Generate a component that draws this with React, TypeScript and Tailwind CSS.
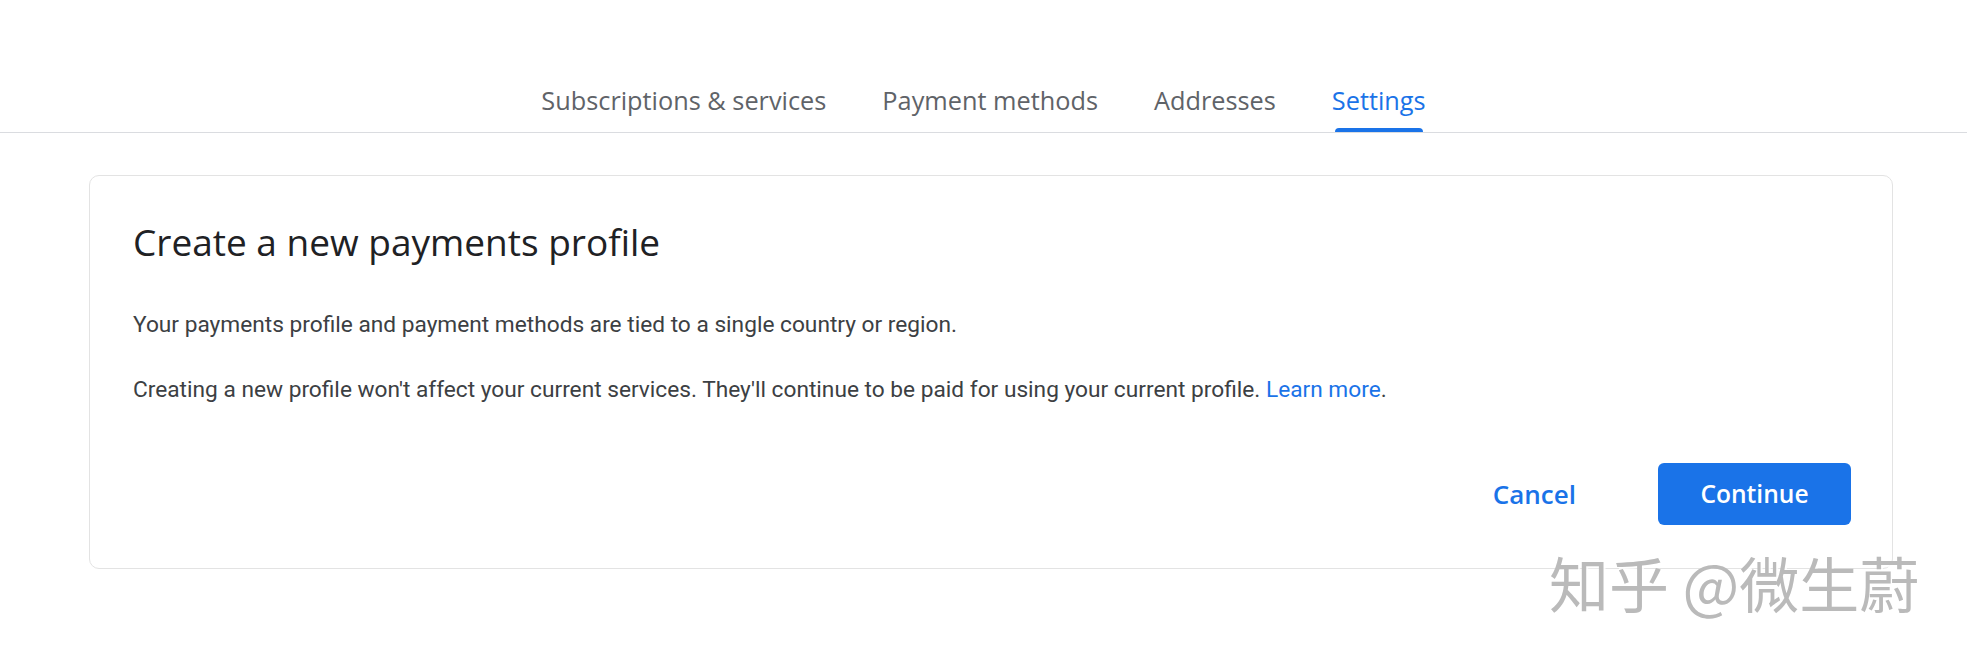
import React from "react";

const tabs = [
  { label: "Subscriptions & services", active: false },
  { label: "Payment methods", active: false },
  { label: "Addresses", active: false },
  { label: "Settings", active: true },
];

export default function App() {
  return (
    <div className="relative w-[1967px] h-[665px] bg-white overflow-hidden">
      <nav className="h-[133px] border-b border-[#dadce0] flex justify-center items-end">
        {tabs.map((t) => (
          <div key={t.label} className="px-[28px] flex flex-col items-stretch">
            <span
              className={`h-[32px] leading-[32px] text-[25.3px] font-medium whitespace-nowrap ${
                t.active ? "text-[#1a73e8]" : "text-[#5f6368]"
              }`}
              style={{ fontFamily: '"Open Sans", Roboto, sans-serif' }}
            >
              {t.label}
            </span>
            <div className="h-[12px]" />
            <div
              className={`h-[4px] mx-[3px] rounded-t-[4px] ${
                t.active ? "bg-[#1a73e8]" : "bg-transparent"
              }`}
            />
          </div>
        ))}
      </nav>

      <div className="mt-[42px] ml-[89px] mr-[74px] border border-[#e3e3e3] rounded-[10px] pl-[43px] pr-[41px] pt-[44px] pb-[43px]">
        <h1
          className="h-[44px] leading-[44px] text-[37px] text-[#202124]"
          style={{ fontFamily: '"Open Sans", Roboto, sans-serif' }}
        >
          Create a new payments profile
        </h1>
        <p
          className="mt-[45px] h-[32px] leading-[32px] text-[22.7px] text-[#3c4043]"
          style={{ fontFamily: 'Roboto, "Liberation Sans", sans-serif' }}
        >
          Your payments profile and payment methods are tied to a single country or region.
        </p>
        <p
          className="mt-[33px] h-[32px] leading-[32px] text-[22.7px] text-[#3c4043]"
          style={{ fontFamily: 'Roboto, "Liberation Sans", sans-serif' }}
        >
          Creating a new profile won't affect your current services. They'll continue to be paid for using your current profile.{" "}
          <a className="text-[#1a73e8]" href="#">
            Learn more
          </a>
          .
        </p>
        <div className="mt-[57px] flex justify-end items-center">
          <button
            className="mr-[58px] px-[24px] h-[62px] text-[26px] font-semibold text-[#1a73e8]"
            style={{ fontFamily: '"Open Sans", Roboto, sans-serif' }}
          >
            Cancel
          </button>
          <button
            className="w-[193px] h-[62px] rounded-[6px] bg-[#1a73e8] text-white text-[24.6px] font-semibold"
            style={{ fontFamily: '"Open Sans", Roboto, sans-serif' }}
          >
            Continue
          </button>
        </div>
      </div>

      <div
        className="absolute left-[1549px] top-[546px] text-[60px] leading-[72px] text-[#bababa] whitespace-nowrap"
        style={{
          fontFamily: '"Noto Sans CJK SC", sans-serif',
          textShadow: "2px 2px 0 rgba(255,255,255,0.8)",
        }}
      >
        知乎 @微生蔚
      </div>
    </div>
  );
}
